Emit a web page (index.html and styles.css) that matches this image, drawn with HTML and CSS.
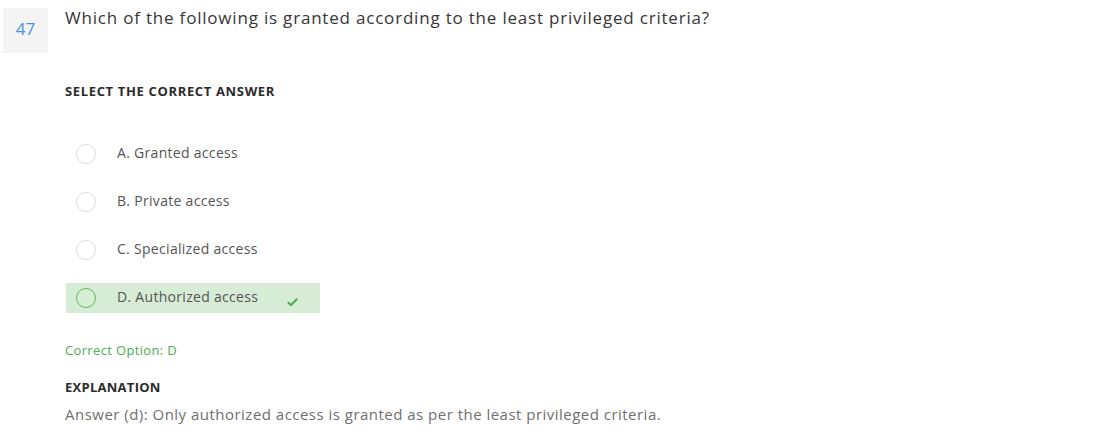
FILE: index.html
```html
<!DOCTYPE html>
<html>
<head>
<meta charset="utf-8">
<link rel="stylesheet" href="styles.css">
</head>
<body>
<div class="question">
  <div class="qnum">47</div>
  <div class="qbody">
    <p class="qtext">Which of the following is granted according to the least privileged criteria?</p>
    <div class="label select-label">SELECT THE CORRECT ANSWER</div>
    <ul class="options">
      <li class="option"><span class="radio"></span><span class="otext">A. Granted access</span></li>
      <li class="option"><span class="radio"></span><span class="otext">B. Private access</span></li>
      <li class="option"><span class="radio"></span><span class="otext">C. Specialized access</span></li>
      <li class="option correct"><span class="radio"></span><span class="otext">D. Authorized access</span>
        <svg class="check" width="11" height="8" viewBox="0 0 11 8"><path d="M0.8 4.2 L4 7 L10.2 0.8" fill="none" stroke="#4caf50" stroke-width="2.1" stroke-linejoin="miter"/></svg>
      </li>
    </ul>
    <div class="correct-option">Correct Option: D</div>
    <div class="label expl-label">EXPLANATION</div>
    <p class="answer">Answer (d): Only authorized access is granted as per the least privileged criteria.</p>
  </div>
</div>
</body>
</html>
```
FILE: styles.css
```css
html, body {
  margin: 0;
  padding: 0;
  background: #ffffff;
}
body {
  font-family: "Open Sans", "Liberation Sans", sans-serif;
  color: #333;
}
.question {
  display: flex;
  align-items: flex-start;
  padding: 8px 0 0 3px;
  gap: 17px;
}
.qnum {
  width: 45px;
  height: 41px;
  padding-bottom: 4px;
  background: #f4f4f4;
  color: #4a90e2;
  font-size: 17px;
  display: flex;
  align-items: center;
  justify-content: center;
  flex: none;
}
.qbody {
  display: flex;
  flex-direction: column;
  align-items: flex-start;
}
.qtext {
  margin: 0;
  font-size: 17px;
  line-height: 19px;
  letter-spacing: 0.8px;
  color: #363636;
}
.label {
  font-size: 13px;
  line-height: 16px;
  font-weight: 700;
  color: #2b2b2b;
}
.select-label {
  margin-top: 56px;
  letter-spacing: 0.65px;
}
.options {
  list-style: none;
  margin: 40px 0 0 0;
  padding: 0;
  display: flex;
  flex-direction: column;
  gap: 18px;
  align-items: flex-start;
}
.option {
  display: flex;
  align-items: center;
  height: 30px;
  padding: 0 22px 0 10px;
  margin-left: 1px;
}
.radio {
  width: 18px;
  height: 18px;
  border: 1px solid #dedede;
  border-radius: 50%;
  flex: none;
}
.otext {
  margin-left: 21px;
  padding-bottom: 3px;
  font-size: 14px;
  letter-spacing: 0.3px;
  color: #555;
}
.option.correct {
  background: #d6ecd5;
}
.option.correct .radio {
  border-color: #5cb85c;
}
.check {
  margin-left: 29px;
  margin-top: 7px;
}
.correct-option {
  margin-top: 28px;
  font-size: 13px;
  line-height: 18px;
  letter-spacing: 0.35px;
  color: #4cae4c;
}
.expl-label {
  margin-top: 20px;
  letter-spacing: 0.27px;
}
.answer {
  margin: 9px 0 0 0;
  font-size: 15px;
  line-height: 20px;
  letter-spacing: 0.48px;
  color: #6f6f6f;
}
```
